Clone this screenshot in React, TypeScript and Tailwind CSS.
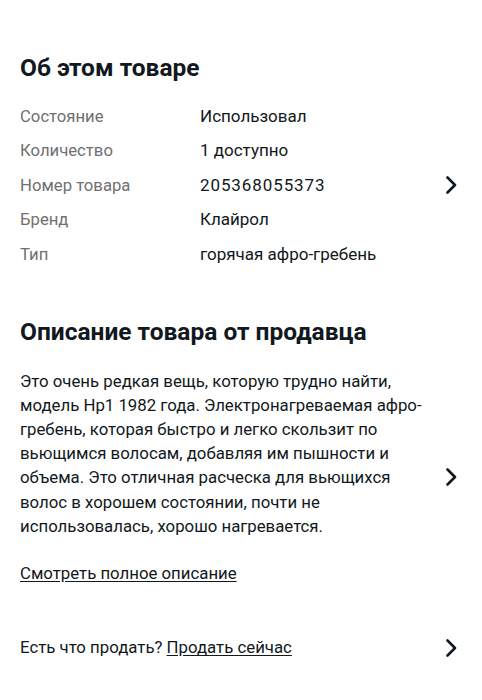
import React from "react";

const Chevron = ({ className = "" }: { className?: string }) => (
  <svg className={className} width="14" height="18" viewBox="0 0 14 18" fill="none">
    <path
      d="M3.5 1.5 L11 9 L3.5 16.5"
      stroke="#111820"
      strokeWidth="2.6"
      strokeLinecap="round"
      strokeLinejoin="round"
    />
  </svg>
);

const specs = [
  { label: "Состояние", value: "Использовал" },
  { label: "Количество", value: "1 доступно" },
  { label: "Номер товара", value: "205368055373", arrow: true, digits: true },
  { label: "Бренд", value: "Клайрол" },
  { label: "Тип", value: "горячая афро-гребень" },
];

const descLines = [
  "Это очень редкая вещь, которую трудно найти,",
  "модель Hp1 1982 года. Электронагреваемая афро-",
  "гребень, которая быстро и легко скользит по",
  "вьющимся волосам, добавляя им пышности и",
  "объема. Это отличная расческа для вьющихся",
  "волос в хорошем состоянии, почти не",
  "использовалась, хорошо нагревается.",
];

export default function App() {
  return (
    <div
      className="w-[482px] h-[700px] bg-white text-[#111820] overflow-hidden"
      style={{ fontFamily: "Roboto, 'Noto Sans', sans-serif" }}
    >
      <div className="pl-5 pr-6 pt-[52px]">
        <h2 className="text-[24.5px] leading-[32px] font-bold">Об этом товаре</h2>

        <div className="mt-[15px] flex flex-col">
          {specs.map((s) => (
            <div key={s.label} className="flex items-center h-[34.5px]">
              <div className="w-[180px] text-[16.7px] text-[#707070]">
                {s.label}
              </div>
              <div
                className={
                  s.digits
                    ? "flex-1 text-[17px] tracking-[0.9px]"
                    : "flex-1 text-[17px]"
                }
              >
                {s.value}
              </div>
              {s.arrow && <Chevron />}
            </div>
          ))}
        </div>

        <h2 className="mt-[44px] text-[24.5px] leading-[32px] font-bold">
          Описание товара от продавца
        </h2>

        <div className="mt-[21px] flex items-start">
          <p className="flex-1 text-[16.8px] leading-[24.2px]">
            {descLines.map((l, i) => (
              <span key={i} className="block whitespace-nowrap">
                {l}
              </span>
            ))}
          </p>
          <Chevron className="mt-[99px]" />
        </div>

        <div className="mt-[23px] text-[16.8px] leading-[24px]">
          <a className="underline underline-offset-2">Смотреть полное описание</a>
        </div>

        <div className="mt-[51px] flex items-center h-[24px]">
          <div className="flex-1 text-[16.8px]">
            Есть что продать?{" "}
            <a className="underline underline-offset-2">Продать сейчас</a>
          </div>
          <Chevron />
        </div>
      </div>
    </div>
  );
}
